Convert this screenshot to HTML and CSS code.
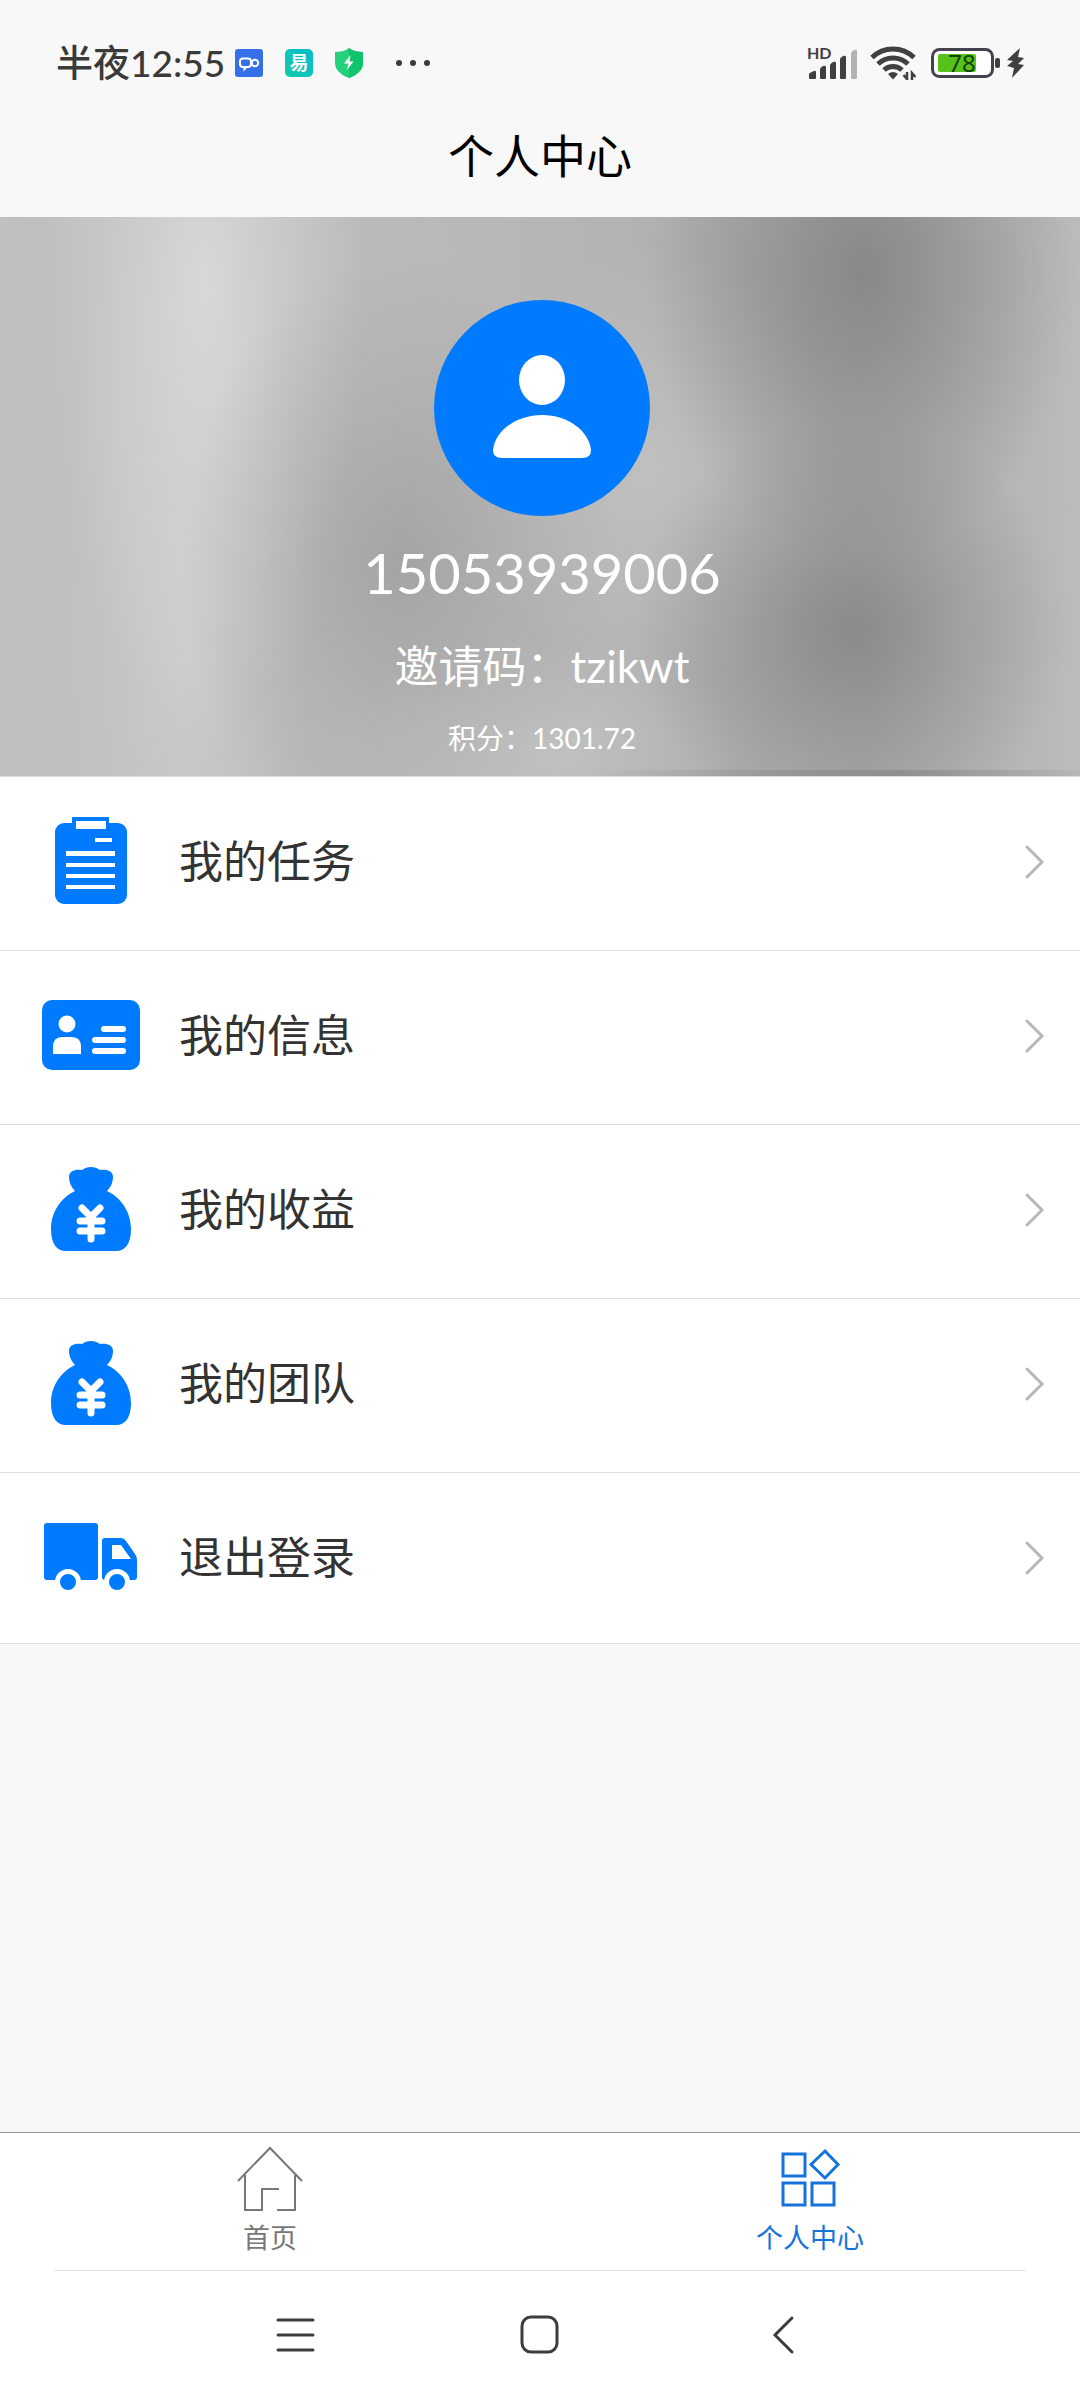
FILE: index.html
```html
<!DOCTYPE html>
<html lang="zh-CN">
<head>
<meta charset="utf-8">
<meta name="viewport" content="width=device-width, initial-scale=1">
<title>个人中心</title>
<link rel="stylesheet" href="styles.css">
</head>
<body>
<div class="status-bar">
  <div class="status-left">
    <span class="clock">半夜12:55</span>
    <svg width="28" height="28" viewBox="0 0 28 28" aria-hidden="true">
      <rect width="28" height="28" rx="3" fill="#3570e8"/>
      <path d="M8 9.500h5a3 3 0 0 1 3 3v2.500a3 3 0 0 1-3 3h-1.500l-2 2v-2H8a3 3 0 0 1-3-3v-2.500a3 3 0 0 1 3-3z" fill="none" stroke="#fff" stroke-width="2"/>
      <circle cx="20" cy="14" r="3.200" fill="none" stroke="#fff" stroke-width="2"/>
    </svg>
    <svg width="28" height="28" viewBox="0 0 28 28" aria-hidden="true">
      <defs><linearGradient id="teal" x1="0" y1="1" x2="1" y2="0"><stop offset="0" stop-color="#16c9a8"/><stop offset="1" stop-color="#04bcd0"/></linearGradient></defs>
      <rect width="28" height="28" rx="5" fill="url(#teal)"/>
      <text x="14" y="21" text-anchor="middle" class="app-glyph">易</text>
    </svg>
    <svg width="28" height="30" viewBox="0 0 28 30" aria-hidden="true">
      <path d="M14 0c4 3 9 4 14 4v11c0 7-6 12-14 15C6 27 0 22 0 15V4c5 0 10-1 14-4z" fill="#25d07c"/>
      <path d="M14 0c4 3 9 4 14 4v11c0 7-6 12-14 15z" fill="#0fc46b"/>
      <path d="M15.500 7L9 15.500h4.500L12 22l6.500-8.500H14.500z" fill="#fff"/>
    </svg>
    <svg class="more" width="36" height="8" viewBox="0 0 36 8" fill="#3a3a3a" aria-hidden="true">
      <circle cx="4" cy="4" r="3"/><circle cx="18" cy="4" r="3"/><circle cx="32" cy="4" r="3"/>
    </svg>
  </div>
  <div class="status-right">
    <svg class="signal" width="52" height="38" viewBox="0 -2 52 38" fill="#404040" aria-hidden="true">
      <text x="1" y="13" class="hd">HD</text>
      <path d="M3 32v-4q0-1 5-3q2-1 2 1v6q0 1-1 1H4q-1 0-1-1zM14 32v-9q0-1 3-3q3-1 3 1v11q0 1-1 1h-4q-1 0-1-1zM24 32V19q0-1 3-3q3-1 3 1v15q0 1-1 1h-4q-1 0-1-1zM34 32V13q0-1 3-3q3-1 3 1v21q0 1-1 1h-4q-1 0-1-1z"/>
      <path d="M45 32V7q0-1 3-3q3-1 3 1v27q0 1-1 1h-4q-1 0-1-1z" fill="#b3b3b3"/>
    </svg>
    <svg class="wifi" width="46" height="34" viewBox="0 0 46 34" fill="none" stroke="#404040" stroke-width="5" aria-hidden="true">
      <path d="M2 11.500a30 30 0 0 1 42 0M8 18a22 22 0 0 1 30 0M14 24a13 13 0 0 1 18 0"/>
      <path d="M18 28q5-4 10 0l-5 5.500z" fill="#404040" stroke="none"/>
      <path d="M37 26v7l-3.500-4M42 34v-7l3.500 4" stroke-width="2.500"/>
    </svg>
    <svg width="70" height="32" viewBox="0 0 70 32" aria-hidden="true">
      <rect x="1.500" y="2.500" width="60" height="27" rx="7" fill="#fff" stroke="#454150" stroke-width="3"/>
      <rect x="7" y="7" width="38" height="18" rx="2" fill="#56c21a"/>
      <rect x="64" y="11" width="5" height="10" rx="2" fill="#404040"/>
      <text x="31" y="25" text-anchor="middle" class="charge">78</text>
    </svg>
    <svg width="17" height="32" viewBox="0 0 17 32" fill="#404040" aria-hidden="true">
      <path d="M13 1L0 13l6 1-6 5 7 2-2 10L17 18l-6-1 6-6-6-1z"/>
    </svg>
  </div>
</div>

<header class="title-bar"><h1>个人中心</h1></header>

<main>
  <section class="hero">
    <svg class="avatar" viewBox="0 0 216 216" role="img" aria-label="头像">
      <circle cx="108" cy="108" r="108" fill="#007aff"/>
      <ellipse cx="108" cy="80" rx="23" ry="25" fill="#fff"/>
      <path d="M68 158Q59 158 59 150C61 131 82 115 108 115C134 115 155 131 157 150Q157 158 148 158z" fill="#fff"/>
    </svg>
    <p class="phone">15053939006</p>
    <p class="invite">邀请码：tzikwt</p>
    <p class="points">积分：1301.72</p>
  </section>

  <nav class="menu" aria-label="个人菜单">
    <a class="row" href="#tasks">
      <svg class="icon" viewBox="0 0 98 98" aria-hidden="true">
        <rect x="13" y="11" width="72" height="81" rx="9" fill="#007aff"/>
        <path d="M30 5h37v15H30z" fill="#007aff"/>
        <path d="M34 9h30v8H34zM53 26h17v4H53zM24 39h49v5H24zM24 51h49v4H24zM24 62h49v4H24zM24 73h49v4H24z" fill="#fff"/>
      </svg>
      <span class="label">我的任务</span>
      <svg class="chevron" viewBox="0 0 20 36" aria-hidden="true"><path d="M2 4l15 15L2 34"/></svg>
    </a>
    <a class="row" href="#info">
      <svg class="icon" viewBox="0 0 98 98" aria-hidden="true">
        <rect y="14" width="98" height="70" rx="10" fill="#007aff"/>
        <circle cx="25" cy="38" r="8.500" fill="#fff"/>
        <path d="M11 68V61Q11 51 20 51H30Q39 51 39 61V68z" fill="#fff"/>
        <path d="M61 43h19M52 54h28M52 65h28" transform="translate(1 0)" stroke="#fff" stroke-width="6" stroke-linecap="round"/>
      </svg>
      <span class="label">我的信息</span>
      <svg class="chevron" viewBox="0 0 20 36" aria-hidden="true"><path d="M2 4l15 15L2 34"/></svg>
    </a>
    <a class="row" href="#income">
      <svg class="icon" viewBox="0 0 98 98" aria-hidden="true">
        <path id="bag" d="M33 31C29 27 27 22 27 17C27 11 33 9 40 10C45 6 53 6 58 10C65 9 71 11 71 17C71 22 69 27 65 31C80 38 89 53 89 69C89 84 83 91 74 91H24C15 91 9 84 9 69C9 53 18 38 33 31z" fill="#007aff"/>
        <path id="yen" d="M40 48l9 9 9-9M38 61h22M38 71h22M49 59v20" fill="none" stroke="#fff" stroke-width="7" stroke-linecap="round"/>
      </svg>
      <span class="label">我的收益</span>
      <svg class="chevron" viewBox="0 0 20 36" aria-hidden="true"><path d="M2 4l15 15L2 34"/></svg>
    </a>
    <a class="row" href="#team">
      <svg class="icon" viewBox="0 0 98 98" aria-hidden="true"><use href="#bag"/><use href="#yen"/></svg>
      <span class="label">我的团队</span>
      <svg class="chevron" viewBox="0 0 20 36" aria-hidden="true"><path d="M2 4l15 15L2 34"/></svg>
    </a>
    <a class="row" href="#logout">
      <svg class="icon" viewBox="0 0 98 98" aria-hidden="true">
        <rect x="2" y="15" width="54" height="57" rx="3" fill="#007aff"/>
        <path d="M63 30H79Q82 30 84 33L93 46Q95 49 95 52V69Q95 72 92 72H63Q60 72 60 69V33Q60 30 63 30z" fill="#007aff"/>
        <path d="M70 37H79L89 51H70z" fill="#fff"/>
        <circle cx="26" cy="74" r="10.500" fill="#007aff" stroke="#fff" stroke-width="5"/>
        <circle cx="75" cy="74" r="10.500" fill="#007aff" stroke="#fff" stroke-width="5"/>
      </svg>
      <span class="label">退出登录</span>
      <svg class="chevron" viewBox="0 0 20 36" aria-hidden="true"><path d="M2 4l15 15L2 34"/></svg>
    </a>
  </nav>
</main>

<nav class="tabs" aria-label="主导航">
  <a class="tab" href="#home">
    <svg viewBox="0 0 66 66" aria-hidden="true"><path d="M1 35L33 2L65 35M8 29V64H25V43H42M40 64H58V29"/></svg>
    <span>首页</span>
  </a>
  <a class="tab active" href="#me" aria-current="page">
    <svg viewBox="0 0 66 66" aria-hidden="true"><path d="M6 8H28V30H6zM6 37H28V59H6zM35 37H57V59H35zM48 5L61 18.500L48 32L34 18.500z"/></svg>
    <span>个人中心</span>
  </a>
</nav>

<div class="system-nav">
  <button type="button" aria-label="最近任务"><svg viewBox="0 0 40 40"><path d="M3 5h35M3 20h35M3 35h35"/></svg></button>
  <button type="button" aria-label="主屏幕"><svg viewBox="0 0 40 40"><rect x="2" y="2" width="35" height="35" rx="9"/></svg></button>
  <button type="button" aria-label="返回"><svg viewBox="0 0 40 40"><path d="M27 3L10 20l17 17"/></svg></button>
</div>
</body>
</html>
```
FILE: styles.css
```css
* { box-sizing: border-box; }

body {
  margin: 0;
  min-height: 100vh;
  display: flex;
  flex-direction: column;
  background: #f8f8f8;
  color: #333;
  font-family: Lato, "Noto Sans CJK SC", sans-serif;
}

h1, p { margin: 0; font-weight: 400; }
a { color: inherit; text-decoration: none; }
svg { display: block; flex: none; }

.status-bar {
  display: flex;
  justify-content: space-between;
  padding: 31px 56px 0;
}
.status-left, .status-right { display: flex; align-items: center; height: 64px; }
.status-left { gap: 22px; }
.status-right { gap: 6px; }
.signal { margin-right: 6px; }
.wifi { margin-right: 9px; }
.clock {
  margin-right: -12px;
  font-size: 37px;
  line-height: 64px;
  font-weight: 500;
  color: #3a3a3a;
}
.more { margin-left: 10px; }
.app-glyph { font-size: 19px; font-weight: 700; fill: #fff; }
.hd { font-size: 16px; font-weight: 700; }
.charge { font-family: "Noto Sans", sans-serif; font-size: 24px; fill: #12400a; }

.title-bar { padding: 21px 0; text-align: center; }
.title-bar h1 { font-size: 46px; line-height: 80px; color: #000; }

.hero {
  display: flex;
  flex-direction: column;
  align-items: center;
  padding: 83px 0 18px 4px;
  color: #fff;
  background:
    linear-gradient(90deg, rgba(130,130,130,0) 55%, rgba(130,130,130,.6) 82%, rgba(130,130,130,.1)) 0 100% / 100% 6px no-repeat,
    radial-gradient(20% 52% at 80% 10%, rgba(128,128,128,.8), rgba(128,128,128,.4) 50%, rgba(128,128,128,0)),
    radial-gradient(20% 38% at 79% 74%, rgba(128,128,128,.75), rgba(128,128,128,.35) 50%, rgba(128,128,128,0)),
    radial-gradient(20% 55% at 37% 62%, rgba(150,150,150,.6), rgba(150,150,150,.25) 50%, rgba(150,150,150,0)),
    radial-gradient(15% 80% at 19% 12%, rgba(224,224,224,.75), rgba(224,224,224,.4) 45%, rgba(224,224,224,0)),
    radial-gradient(12% 80% at 17% 76%, rgba(215,215,215,.55), rgba(215,215,215,.25) 50%, rgba(215,215,215,0)),
    radial-gradient(18% 40% at 60% 45%, rgba(205,205,205,.5), rgba(205,205,205,0)),
    radial-gradient(20% 20% at 50% 95%, rgba(205,205,205,.5), rgba(205,205,205,0)),
    linear-gradient(90deg, #c0c0c0, #b8b8b8 45%, #a9a9a9 80%, #bcbcbc);
}
.avatar { width: 216px; height: 216px; }
.phone { margin-top: 17px; font-size: 56px; line-height: 80px; }
.invite { margin-top: 23px; font-size: 44px; line-height: 60px; }
.points { margin-top: 22px; font-size: 28px; line-height: 40px; }

.menu { background: #fff; border-top: 1px solid #ddd; }
.row {
  display: flex;
  align-items: center;
  padding: 35px 35px 40px 42px;
  border-bottom: 1px solid #e0e0e0;
}
.row:last-child { padding-bottom: 37px; }
.icon { width: 98px; height: 98px; }
.label { flex: 1; padding-left: 39px; font-size: 44px; line-height: 64px; }
.chevron {
  width: 20px;
  height: 36px;
  fill: none;
  stroke: #b8b8b8;
  stroke-width: 3;
  stroke-linecap: round;
}

.tabs {
  display: flex;
  margin-top: auto;
  border-top: 1px solid #999;
  background: #fff;
}
.tab {
  flex: 1;
  display: flex;
  flex-direction: column;
  align-items: center;
  gap: 6px;
  padding: 13px 0 12px;
  font-size: 27px;
  line-height: 40px;
  color: #777;
}
.tab svg { width: 66px; height: 66px; fill: none; stroke: currentColor; stroke-width: 2; }
.tab.active { color: #1673dc; }
.tab.active svg { stroke-width: 3; }

.system-nav {
  display: grid;
  grid-template-columns: repeat(3, 1fr);
  padding: 0 16%;
  background: linear-gradient(#e4e4e4, #e4e4e4) center top / 90% 1px no-repeat #fff;
}
.system-nav button {
  display: flex;
  justify-content: center;
  padding: 45px 0;
  border: 0;
  background: none;
}
.system-nav svg { width: 40px; height: 40px; fill: none; stroke: #3d3d3d; stroke-width: 3; stroke-linecap: round; }
```
